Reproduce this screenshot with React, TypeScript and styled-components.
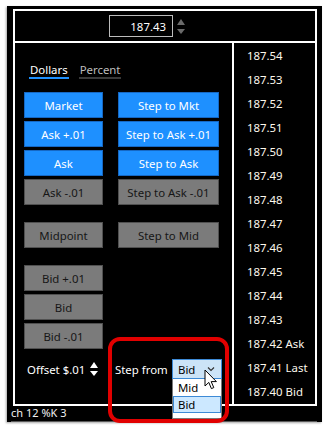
import * as React from "react";
import styled, { createGlobalStyle } from "styled-components";

const GlobalStyle = createGlobalStyle`
  html, body {
    margin: 0;
    padding: 0;
    background: #ffffff;
  }
  body {
    font-family: "Noto Sans", "Open Sans", sans-serif;
  }
`;

const UI_FONT = `"Noto Sans", "Open Sans", "Liberation Sans", sans-serif`;

const Shot = styled.div`
  position: relative;
  width: 329px;
  height: 431px;
  box-sizing: border-box;
  padding: 6px 7px 9px 7px;
  background: #ffffff;
  overflow: hidden;
`;

const Dark = styled.div`
  height: 416px;
  box-sizing: border-box;
  padding: 3px 5px 0 6px;
  background: #000;
  box-shadow: -1px 1px 2px rgba(0, 0, 0, 0.35);
  display: flex;
  flex-direction: column;
`;

const Panel = styled.div`
  width: 304px;
  height: 397px;
  box-sizing: border-box;
  border: 2px solid #fff;
  display: flex;
  flex-direction: column;
  font-family: ${UI_FONT};
  font-size: 11.4px;
  color: #fff;
`;

const TopBar = styled.div`
  height: 34px;
  box-sizing: border-box;
  border-bottom: 2px solid #fff;
  display: flex;
  align-items: center;
  padding-left: 94px;
`;

const PriceInput = styled.div`
  width: 64px;
  height: 22px;
  box-sizing: border-box;
  border: 1px solid #bcbcbc;
  background: #000;
  color: #fff;
  display: flex;
  align-items: center;
  justify-content: flex-end;
  padding-right: 6px;
`;

const Spin = styled.div<{ $gap: number; $ml: number }>`
  display: flex;
  flex-direction: column;
  gap: ${(p) => p.$gap}px;
  margin-left: ${(p) => p.$ml}px;
`;

const Tri = styled.div<{ $up?: boolean; $color: string }>`
  width: 0;
  height: 0;
  border-left: 4px solid transparent;
  border-right: 4px solid transparent;
  ${(p) =>
    p.$up
      ? `border-bottom: 6px solid ${p.$color};`
      : `border-top: 5px solid ${p.$color};`}
`;

const Body = styled.div`
  flex: 1;
  display: flex;
`;

const LeftPane = styled.div`
  width: 219px;
  box-sizing: border-box;
  border-right: 2px solid #fff;
  padding: 20px 0 0 9px;
  display: flex;
  flex-direction: column;
`;

const Tabs = styled.div`
  display: flex;
  gap: 10px;
  margin-left: 5px;
`;

const Tab = styled.div<{ $active?: boolean }>`
  line-height: 14px;
  padding: 0 1px;
  color: ${(p) => (p.$active ? "#ffffff" : "#bdbdbd")};
  border-bottom: 2px solid ${(p) => (p.$active ? "#1e90ff" : "#3a3a3a")};
`;

const Groups = styled.div`
  margin-top: 13px;
  display: flex;
  flex-direction: column;
  gap: 17px;
`;

const Group = styled.div`
  display: grid;
  grid-template-columns: 79px 101px;
  column-gap: 15px;
  row-gap: 3px;
`;

const Btn = styled.div<{ $kind: "blue" | "grey"; $col?: number }>`
  grid-column: ${(p) => p.$col ?? "auto"};
  height: 26px;
  box-sizing: border-box;
  display: flex;
  align-items: center;
  justify-content: center;
  white-space: nowrap;
  background: ${(p) => (p.$kind === "blue" ? "#1e90ff" : "#7b7b7b")};
  border: 1px solid ${(p) => (p.$kind === "blue" ? "#1668c4" : "#505050")};
  color: ${(p) => (p.$kind === "blue" ? "#ffffff" : "#161616")};
`;

const BottomRow = styled.div`
  margin-top: 10px;
  height: 20px;
  display: flex;
  align-items: center;
  padding-left: 3px;
`;

const Label = styled.span<{ $w: number; $ml?: number }>`
  width: ${(p) => p.$w}px;
  margin-left: ${(p) => p.$ml ?? 0}px;
  color: #fff;
  white-space: nowrap;
`;

const Select = styled.div`
  position: relative;
  margin-left: 6px;
  width: 50px;
  height: 20px;
  box-sizing: border-box;
  background: #cce4f7;
  border: 1px solid #3d8ad6;
  color: #000;
  display: flex;
  align-items: center;
  padding-left: 5px;
`;

const Chevron = styled.svg`
  position: absolute;
  right: 6px;
  top: 6px;
`;

const DropList = styled.div`
  position: absolute;
  left: -1px;
  top: 19px;
  width: 50px;
  height: 40px;
  box-sizing: border-box;
  background: #fff;
  border: 1px solid #7a7a7a;
  border-top: none;
  display: flex;
  flex-direction: column;
`;

const DropItem = styled.div<{ $selected?: boolean }>`
  height: 17px;
  box-sizing: border-box;
  padding-left: 4px;
  display: flex;
  align-items: center;
  color: #000;
  background: ${(p) => (p.$selected ? "#cce8ff" : "transparent")};
  border: 1px solid ${(p) => (p.$selected ? "#3d8ad6" : "transparent")};
`;

const PriceCol = styled.div`
  flex: 1;
  padding: 1px 0 0 13px;
  display: flex;
  flex-direction: column;
`;

const PriceRow = styled.div`
  height: 24px;
  line-height: 24px;
  color: #fdf8ec;
  white-space: nowrap;
`;

const Footer = styled.div`
  height: 16px;
  box-sizing: border-box;
  border-bottom: 1px solid #5a5a5a;
  font-family: ${UI_FONT};
  font-size: 11px;
  line-height: 11px;
  color: #f0f0f0;
  padding-top: 1px;
  margin-left: -2px;
`;

const Highlight = styled.div`
  position: absolute;
  left: 108px;
  top: 337px;
  width: 121px;
  height: 86px;
  box-sizing: border-box;
  border: 4px solid #e10000;
  border-radius: 12px;
  pointer-events: none;
`;

const Cursor = styled.svg`
  position: absolute;
  left: 204px;
  top: 369px;
`;

const prices = [
  "187.54",
  "187.53",
  "187.52",
  "187.51",
  "187.50",
  "187.49",
  "187.48",
  "187.47",
  "187.46",
  "187.45",
  "187.44",
  "187.43",
  "187.42 Ask",
  "187.41 Last",
  "187.40 Bid",
];

export default function App() {
  return (
    <>
      <GlobalStyle />
      <Shot>
        <Dark>
          <Panel>
            <TopBar>
              <PriceInput>187.43</PriceInput>
              <Spin $gap={4} $ml={4}>
                <Tri $up $color="#6a6a6a" />
                <Tri $color="#6a6a6a" />
              </Spin>
            </TopBar>
            <Body>
              <LeftPane>
                <Tabs>
                  <Tab $active>Dollars</Tab>
                  <Tab>Percent</Tab>
                </Tabs>
                <Groups>
                  <Group>
                    <Btn $kind="blue">Market</Btn>
                    <Btn $kind="blue">Step to Mkt</Btn>
                    <Btn $kind="blue">Ask +.01</Btn>
                    <Btn $kind="blue">Step to Ask +.01</Btn>
                    <Btn $kind="blue">Ask</Btn>
                    <Btn $kind="blue">Step to Ask</Btn>
                    <Btn $kind="grey">Ask -.01</Btn>
                    <Btn $kind="grey">Step to Ask -.01</Btn>
                  </Group>
                  <Group>
                    <Btn $kind="grey">Midpoint</Btn>
                    <Btn $kind="grey">Step to Mid</Btn>
                  </Group>
                  <Group>
                    <Btn $kind="grey" $col={1}>Bid +.01</Btn>
                    <Btn $kind="grey" $col={1}>Bid</Btn>
                    <Btn $kind="grey" $col={1}>Bid -.01</Btn>
                  </Group>
                </Groups>
                <BottomRow>
                  <Label $w={59}>Offset $.01</Label>
                  <Spin $gap={3} $ml={4}>
                    <Tri $up $color="#fff" />
                    <Tri $color="#fff" />
                  </Spin>
                  <Label $w={51} $ml={17}>Step from</Label>
                  <Select>
                    Bid
                    <Chevron width="8" height="6" viewBox="0 0 8 6">
                      <path d="M1 1.5 L4 4.5 L7 1.5" fill="none" stroke="#333" strokeWidth="1.2" />
                    </Chevron>
                    <DropList>
                      <DropItem>Mid</DropItem>
                      <DropItem $selected>Bid</DropItem>
                    </DropList>
                  </Select>
                </BottomRow>
              </LeftPane>
              <PriceCol>
                {prices.map((p) => (
                  <PriceRow key={p}>{p}</PriceRow>
                ))}
              </PriceCol>
            </Body>
          </Panel>
          <Footer>ch 12 %K 3</Footer>
        </Dark>
        <Highlight />
        <Cursor width="14" height="22" viewBox="0 0 14 22">
          <path
            d="M1 1 L1 17 L4.8 13.4 L7.4 19.6 L9.8 18.6 L7.2 12.6 L12.4 12.6 Z"
            fill="#fff"
            stroke="#000"
            strokeWidth="1"
            strokeLinejoin="round"
          />
        </Cursor>
      </Shot>
    </>
  );
}
